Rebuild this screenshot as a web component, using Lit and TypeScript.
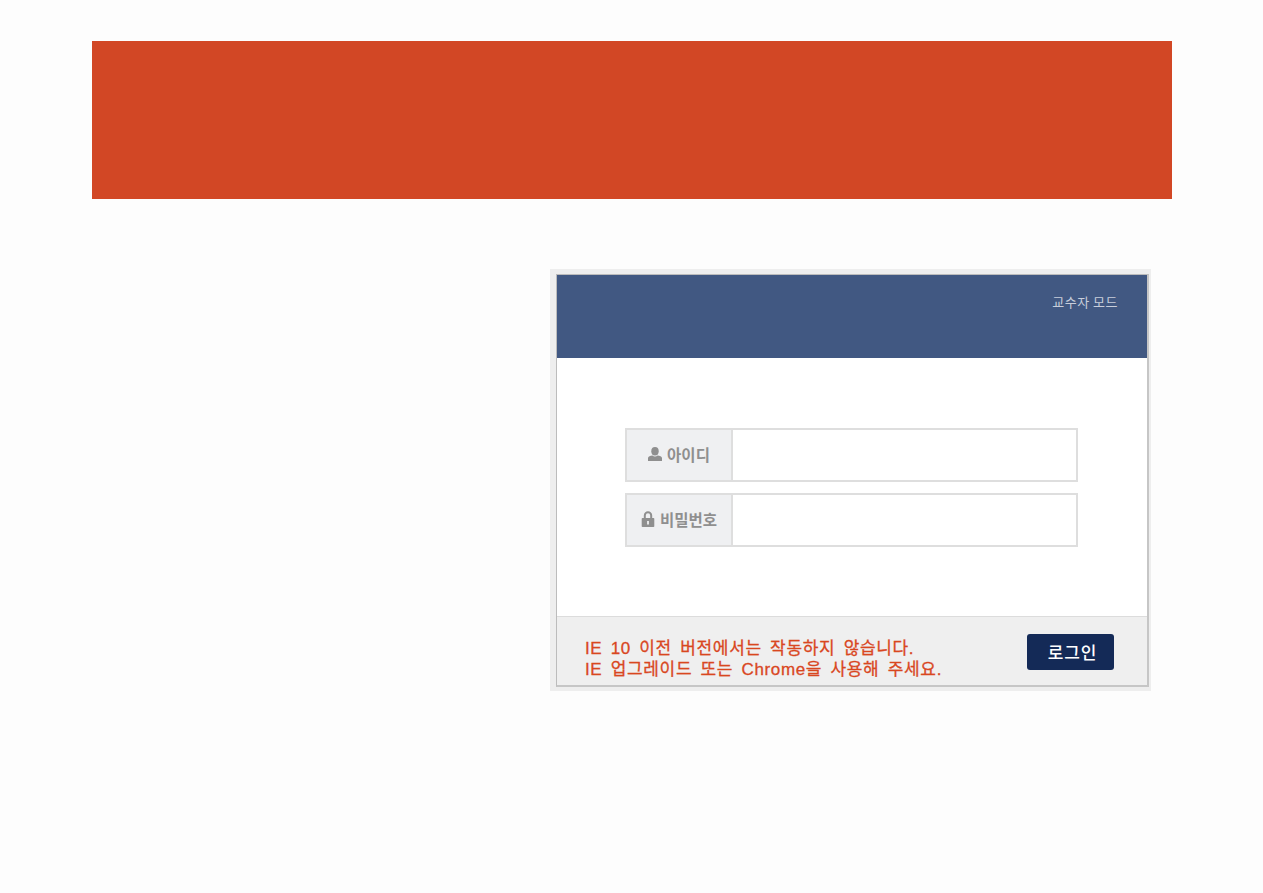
import { LitElement, html, css } from "lit";
import { customElement } from "lit/decorators.js";

@customElement("app-root")
export class AppRoot extends LitElement {
  static styles = css`
    :host {
      display: block;
      min-height: 893px;
      background: #fdfdfd;
      font-family: "Noto Sans CJK KR", "Noto Sans", sans-serif;
    }

    .page {
      padding: 41px 91px 0 92px;
    }

    .banner {
      height: 158px;
      background: #d24725;
    }

    .frame {
      width: 601px;
      height: 422px;
      box-sizing: border-box;
      margin: 70px 0 0 458px;
      padding: 5px 2px 4px 6px;
      background: #eeeeee;
    }

    .card {
      height: 100%;
      box-sizing: border-box;
      display: flex;
      flex-direction: column;
      border: 1px solid #bcbcbc;
      border-right: 2px solid #c6c6c6;
      border-bottom: 2px solid #c6c6c6;
      background: #ffffff;
    }

    .head {
      height: 83px;
      box-sizing: border-box;
      padding: 18px 29px 0 0;
      background: #415882;
      color: #c8cedb;
      font-size: 13px;
      line-height: 18px;
      letter-spacing: 0.5px;
      text-align: right;
    }

    .form {
      flex: 1;
      display: flex;
      flex-direction: column;
      gap: 11px;
      padding: 70px 69px 0 68px;
    }

    .row {
      display: flex;
      height: 54px;
      box-sizing: border-box;
      border: 2px solid #dedede;
    }

    .label {
      width: 106px;
      flex-shrink: 0;
      display: flex;
      align-items: center;
      justify-content: center;
      gap: 5px;
      box-sizing: border-box;
      padding-bottom: 2px;
      border-right: 2px solid #dedede;
      background: #eff0f2;
      color: #8f8f8f;
      font-size: 15.5px;
      font-weight: 700;
    }

    .label svg {
      width: 14px;
      height: 16px;
      flex-shrink: 0;
      fill: #8f8f8f;
    }

    .field {
      flex: 1;
      min-width: 0;
      border: none;
      outline: none;
      background: #ffffff;
    }

    .foot {
      height: 69px;
      box-sizing: border-box;
      display: flex;
      justify-content: space-between;
      padding: 17px 33px 0 28px;
      border-top: 1px solid #dcdcdc;
      background: #efefef;
    }

    .notice {
      margin-top: 4px;
      color: #d9471f;
      font-family: "Liberation Sans", "Noto Sans CJK KR", sans-serif;
      font-size: 17px;
      line-height: 21px;
      letter-spacing: 0.65px;
      word-spacing: 3px;
      -webkit-text-stroke: 0.3px #d9471f;
      white-space: nowrap;
    }

    .login {
      width: 87px;
      height: 36px;
      padding: 0 0 2px 4px;
      border: none;
      border-radius: 3px;
      background: #142a57;
      color: #ffffff;
      font-family: inherit;
      font-size: 17px;
      font-weight: 500;
      letter-spacing: 0.9px;
      cursor: pointer;
    }
  `;

  render() {
    return html`
      <div class="page">
        <div class="banner"></div>
        <div class="frame">
          <div class="card">
            <div class="head">교수자 모드</div>
            <div class="form">
              <div class="row">
                <div class="label">
                  <svg viewBox="0 0 14 16">
                    <ellipse cx="7" cy="5.2" rx="3.7" ry="4.2"></ellipse>
                    <path d="M0 15v-3c0-1.5 2.4-2 4.4-2.4 1.4 1.2 3.8 1.2 5.2 0 2 .4 4.4.9 4.4 2.4v3z"></path>
                  </svg>
                  아이디
                </div>
                <input class="field" type="text" />
              </div>
              <div class="row">
                <div class="label">
                  <svg viewBox="0 0 14 16">
                    <path
                      fill-rule="evenodd"
                      d="M2.8 7V4.4a4.2 4.2 0 0 1 8.4 0V7h1.3a.8.8 0 0 1 .8.8v7.4a.8.8 0 0 1-.8.8h-11a.8.8 0 0 1-.8-.8V7.8a.8.8 0 0 1 .8-.8zm2 0h4.4V4.4a2.2 2.2 0 0 0-4.4 0zM6.1 10v3.4h1.8V10z"
                    ></path>
                  </svg>
                  비밀번호
                </div>
                <input class="field" type="password" />
              </div>
            </div>
            <div class="foot">
              <div class="notice">
                IE 10 이전 버전에서는 작동하지 않습니다.<br />
                IE 업그레이드 또는 Chrome을 사용해 주세요.
              </div>
              <button class="login" type="button">로그인</button>
            </div>
          </div>
        </div>
      </div>
    `;
  }
}
